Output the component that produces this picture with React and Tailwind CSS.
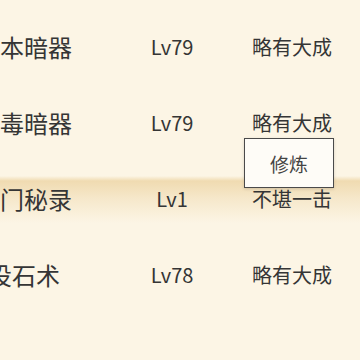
import React from 'react';

const rows = [
  { name: '基本暗器', lv: 'Lv79', state: '略有大成' },
  { name: '淬毒暗器', lv: 'Lv79', state: '略有大成' },
  { name: '独门秘录', lv: 'Lv1', state: '不堪一击', active: true },
  { name: '投石术', lv: 'Lv78', state: '略有大成' },
];

const cjk = { fontFamily: '"Noto Sans CJK SC", "Noto Sans", sans-serif' };

const App = () => {
  return (
    <div className="w-[360px] h-[360px] overflow-hidden bg-[#fcf5e5] text-[#353535]" style={cjk}>
      <div className="relative pt-[9px]">
        {rows.map((r) => (
          <div
            key={r.name}
            className={
              'flex items-center h-[76px] -ml-[56px] w-[456px] ' +
              (r.active
                ? 'bg-[linear-gradient(to_bottom,transparent_15px,#f0dbb1_20px,#f6e8cb_38px,#fcf5e5_62px)]'
                : '')
            }
          >
            <div className="w-[160px] text-center text-[24px] leading-none">{r.name}</div>
            <div className="w-[136px] text-center text-[20px] leading-none">{r.lv}</div>
            <div className="w-[104px] text-center text-[20px] leading-none">{r.state}</div>
          </div>
        ))}

        <div className="absolute left-[244px] top-[138px] w-[90px] h-[50px] flex items-center justify-center bg-[#fefcf7] border-[1.5px] border-[#4a4a4a] shadow-[0_1px_3px_rgba(0,0,0,0.15)]">
          <span className="text-[19px] leading-none text-[#444]">修炼</span>
        </div>
      </div>
    </div>
  );
};

export default App;
